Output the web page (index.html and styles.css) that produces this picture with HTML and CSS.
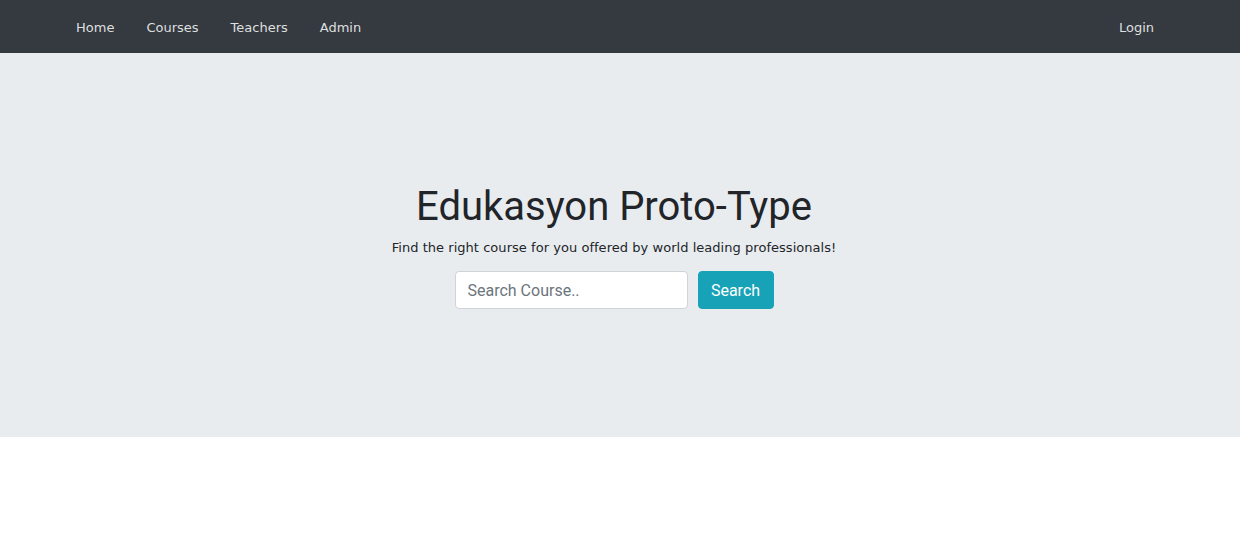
FILE: index.html
```html
<!DOCTYPE html>
<html>
<head>
<meta charset="utf-8">
<link rel="stylesheet" href="styles.css">
</head>
<body>
<nav class="navbar">
  <ul class="nav-left">
    <li><a href="#">Home</a></li>
    <li><a href="#">Courses</a></li>
    <li><a href="#">Teachers</a></li>
    <li><a href="#">Admin</a></li>
  </ul>
  <ul class="nav-right">
    <li><a href="#">Login</a></li>
  </ul>
</nav>
<section class="hero">
  <h1 class="title">Edukasyon Proto-Type</h1>
  <p class="lead">Find the right course for you offered by world leading professionals!</p>
  <form class="search">
    <input class="search-input" type="text" placeholder="Search Course..">
    <button class="search-btn" type="button">Search</button>
  </form>
</section>
</body>
</html>
```
FILE: styles.css
```css
* { box-sizing: border-box; }
body {
  margin: 0;
  font-family: "DejaVu Sans", sans-serif;
  background: #fff;
  color: #212529;
}
.navbar {
  height: 53px;
  background: #343a40;
  display: flex;
  align-items: center;
  justify-content: space-between;
  padding: 2px 70px 0 60px;
}
.navbar ul {
  list-style: none;
  margin: 0;
  padding: 0;
  display: flex;
}
.navbar a {
  display: block;
  padding: 8px 16px;
  color: rgba(255,255,255,0.85);
  text-decoration: none;
  font-size: 13px;
  line-height: 20px;
}
.hero {
  height: 384px;
  background: #e9ecef;
  display: flex;
  flex-direction: column;
  align-items: center;
  justify-content: center;
  padding-right: 12px;
}
.title {
  margin: 2px 0 8px;
  font-family: Roboto, sans-serif;
  font-weight: 400;
  font-size: 40px;
  line-height: 48px;
}
.lead {
  margin: 0 0 14px;
  font-size: 13px;
  line-height: 18px;
  letter-spacing: 0.04px;
}
.search {
  display: flex;
  gap: 10px;
}
.search-input {
  width: 233px;
  height: 38px;
  padding: 6px 12px;
  border: 1px solid #ced4da;
  border-radius: 4px;
  font-family: Roboto, sans-serif;
  font-size: 16px;
  color: #495057;
  background: #fff;
}
.search-input::placeholder { color: #6c757d; }
.search-btn {
  width: 76px;
  height: 38px;
  border: 1px solid #17a2b8;
  border-radius: 4px;
  background: #17a2b8;
  color: #fff;
  font-family: Roboto, sans-serif;
  font-size: 16px;
  padding: 0;
}
```
